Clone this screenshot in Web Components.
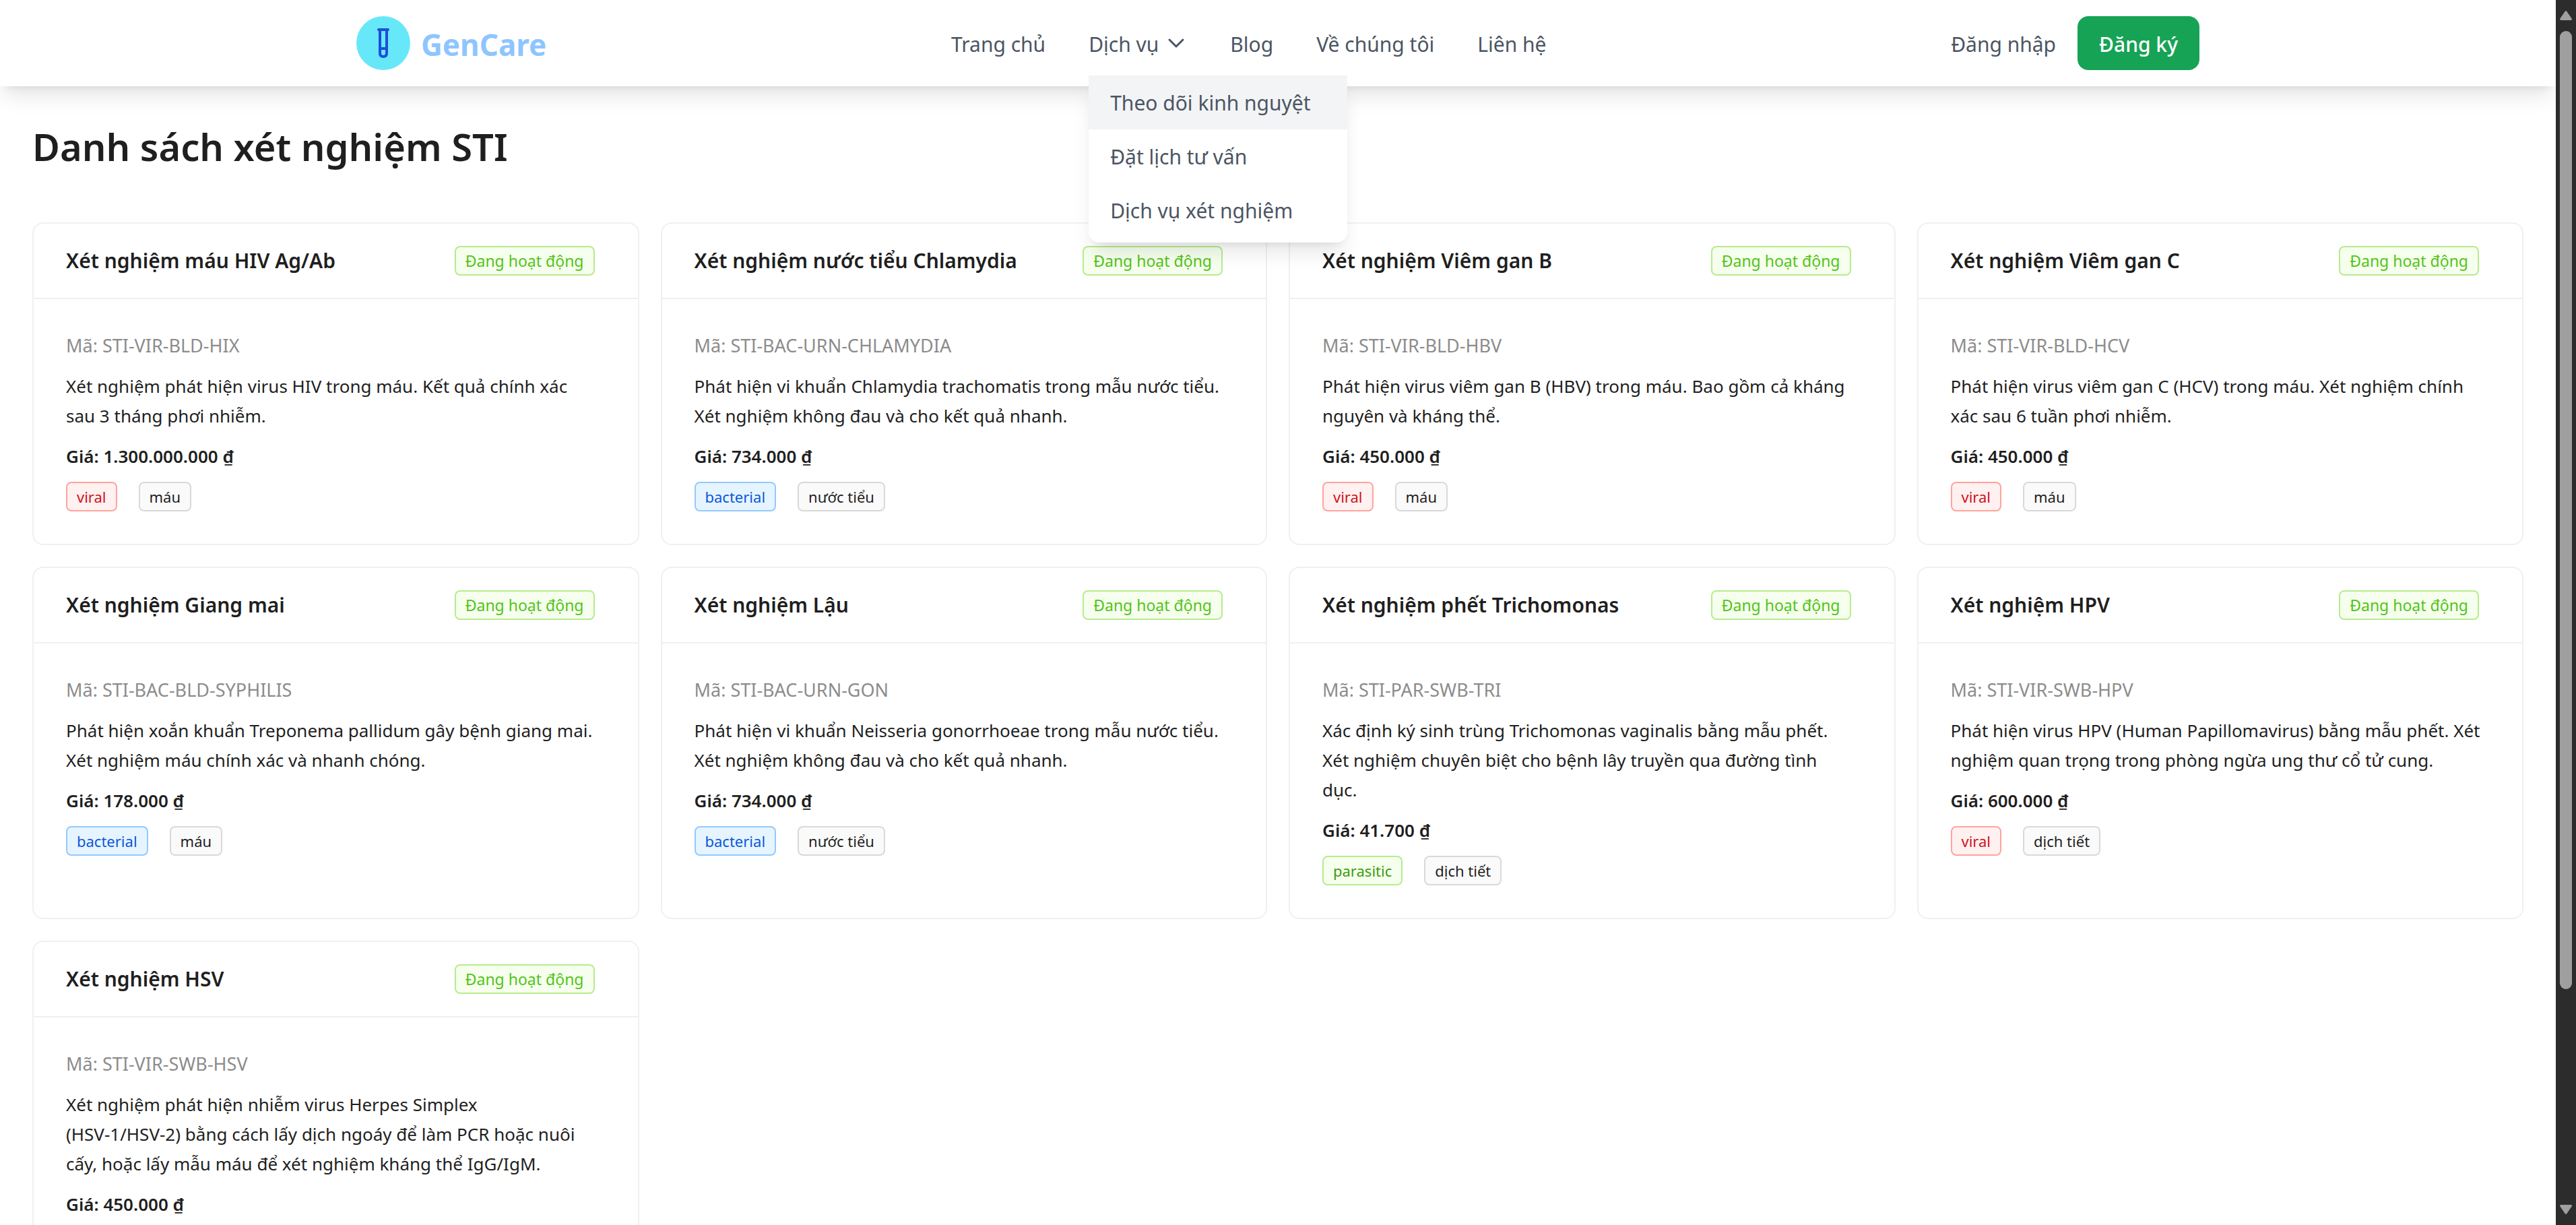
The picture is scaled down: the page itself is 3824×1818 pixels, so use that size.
<!DOCTYPE html>
<html lang="vi">
<head>
<meta charset="utf-8">
<meta name="viewport" content="width=device-width, initial-scale=1">
<title>GenCare</title>
<style>
  html, body { margin: 0; height: 100%; overflow: hidden; background: #fff; }
  body { font-family: "Noto Sans", "Open Sans", sans-serif; color: #1f1f1f; }
</style>
</head>
<body>
<gc-app>
  <gc-header slot="header"></gc-header>
  <gc-test-list heading="Danh sách xét nghiệm STI"></gc-test-list>
</gc-app>

<script>
class GcElement extends HTMLElement {
  connectedCallback() {
    if (this.shadowRoot) return;
    this.attachShadow({ mode: 'open' }).innerHTML = this.render();
  }
}

/* Frame: header and content on the left, scroll track on the right */
customElements.define('gc-app', class extends GcElement {
  render() {
    return `
    <style>
      :host { display: flex; height: 100vh; overflow: hidden; }
      .view { flex: 1; min-width: 0; overflow: hidden; display: flex; flex-direction: column; }
      main { flex: 1; min-height: 0; }
    </style>
    <div class="view">
      <slot name="header"></slot>
      <main><slot></slot></main>
    </div>
    <gc-scrollbar></gc-scrollbar>`;
  }
});

customElements.define('gc-scrollbar', class extends GcElement {
  render() {
    return `
    <style>
      :host { display: flex; flex-direction: column; align-items: center; width: 30px; padding: 16px 0; box-sizing: border-box; background: #2c2c2c; }
      svg { display: block; width: 18px; height: 14px; fill: #9f9f9f; }
      .track { flex: 1; width: 18px; padding: 16px 0; }
      .thumb { height: 82.4%; border-radius: 9px; background: #9f9f9f; }
    </style>
    <svg viewBox="0 0 18 14" aria-hidden="true"><path d="M7.6 1Q9-1 10.4 1L17.6 11.5Q18.6 14 16.5 14H1.5Q-.6 14 .4 11.5Z"/></svg>
    <div class="track"><div class="thumb"></div></div>
    <svg viewBox="0 0 18 14" aria-hidden="true"><path d="M7.6 13Q9 15 10.4 13L17.6 2.5Q18.6 0 16.5 0H1.5Q-.6 0 .4 2.5Z"/></svg>`;
  }
});

customElements.define('gc-logo', class extends GcElement {
  render() {
    return `
    <style>
      :host { display: block; }
      a { display: flex; align-items: center; gap: 16px; text-decoration: none; color: #8ec5ff; font-size: 44px; font-weight: 700; line-height: 64px; }
      .mark { display: flex; align-items: center; justify-content: center; width: 80px; height: 80px; border-radius: 50%; background: #67e8f9; }
      .name { padding-top: 4px; }
      svg { width: 48px; height: 48px; fill: none; stroke: #1d4ed8; stroke-width: 4; stroke-linecap: round; stroke-linejoin: round; }
    </style>
    <a href="#">
      <span class="mark"><svg viewBox="0 0 48 48" aria-hidden="true">
        <path d="M17 4H31M19 4V39Q19 44 24 44T29 39V4M19 32H29"/>
      </svg></span>
      <span class="name">GenCare</span>
    </a>`;
  }
});

customElements.define('gc-menu', class extends GcElement {
  render() {
    return `
    <style>
      :host { display: block; position: relative; }
      button { display: flex; align-items: center; gap: 10px; padding: 0; border: 0; background: none; font: inherit; color: inherit; line-height: 48px; cursor: pointer; }
      svg { width: 32px; height: 32px; fill: none; stroke: currentColor; stroke-width: 3; stroke-linecap: round; stroke-linejoin: round; }
      .panel { position: absolute; left: 0; top: 100%; z-index: 2; margin-top: 22px; width: 384px; padding-bottom: 8px; background: #fff; border-radius: 0 0 16px 16px; box-shadow: 0 20px 30px -6px rgba(0,0,0,.1), 0 8px 12px -8px rgba(0,0,0,.1); }
      ::slotted(a) { display: block; padding: 17px 32px 15px; line-height: 48px; color: inherit; text-decoration: none; }
      ::slotted(a[aria-current]) { background: #f3f4f6; }
    </style>
    <button type="button" aria-expanded="true">${this.getAttribute('label')}
      <svg viewBox="0 0 32 32" aria-hidden="true"><path d="M6 9L16 19L26 9"/></svg>
    </button>
    <div class="panel"><slot></slot></div>`;
  }
});

customElements.define('gc-header', class extends GcElement {
  render() {
    return `
    <style>
      :host { display: block; position: relative; z-index: 1; padding: 24px 64px; background: #fff; box-shadow: 0 20px 30px -6px rgba(0,0,0,.1), 0 8px 12px -8px rgba(0,0,0,.1); font-size: 30px; line-height: 48px; color: #4b5563; }
      .bar { display: flex; align-items: center; justify-content: space-between; max-width: 2736px; margin: 0 auto; }
      nav { display: flex; align-items: center; gap: 64px; padding-top: 4px; }
      .auth { display: flex; align-items: center; gap: 32px; }
      a { color: inherit; text-decoration: none; }
      .auth a { padding-top: 4px; }
      .auth button { height: 80px; padding: 4px 32px 0; border: 0; border-radius: 16px; background: #17a355; color: #fff; font: inherit; font-weight: 500; cursor: pointer; }
    </style>
    <div class="bar">
      <gc-logo></gc-logo>
      <nav>
        <a href="#">Trang chủ</a>
        <gc-menu label="Dịch vụ">
          <a href="#" aria-current="true">Theo dõi kinh nguyệt</a>
          <a href="#">Đặt lịch tư vấn</a>
          <a href="#">Dịch vụ xét nghiệm</a>
        </gc-menu>
        <a href="#">Blog</a>
        <a href="#">Về chúng tôi</a>
        <a href="#">Liên hệ</a>
      </nav>
      <div class="auth">
        <a href="#">Đăng nhập</a>
        <button type="button">Đăng ký</button>
      </div>
    </div>`;
  }
});

customElements.define('gc-tag', class extends GcElement {
  render() {
    return `
    <style>
      :host { display: block; box-sizing: border-box; padding: 0 14px; border: 2px solid #d9d9d9; border-radius: 8px; background: #fafafa; color: #1f1f1f; font-size: 22px; line-height: 40px; font-weight: 400; white-space: nowrap; }
      :host([tone="success"]) { background: #f6ffed; border-color: #b7eb8f; color: #52c41a; font-size: 23px; }
      :host([tone="viral"]) { background: #fff1f0; border-color: #ffa39e; color: #cf1322; }
      :host([tone="bacterial"]) { background: #e6f4ff; border-color: #91caff; color: #0958d9; }
      :host([tone="parasitic"]) { background: #f6ffed; border-color: #b7eb8f; color: #389e0d; }
    </style>
    <slot></slot>`;
  }
});

customElements.define('gc-test-card', class extends GcElement {
  render() {
    const a = n => this.getAttribute(n);
    const tags = a('kind')
      ? `<gc-tag tone="${a('kind')}">${a('kind')}</gc-tag><gc-tag>${a('sample')}</gc-tag>` : '';
    return `
    <style>
      :host { display: block; box-sizing: border-box; border: 2px solid #f0f0f0; border-radius: 16px; background: #fff; }
      header { display: flex; align-items: center; justify-content: space-between; height: 110px; padding: 0 64px 0 48px; border-bottom: 2px solid #f0f0f0; }
      h2 { margin: 0; font-size: 30px; font-weight: 600; line-height: 48px; }
      .body { display: flex; flex-direction: column; gap: 16px; padding: 47px 60px 48px 48px; font-size: 26px; line-height: 44px; }
      p { margin: 0; }
      .code { font-size: 27px; color: #8c8c8c; }
      .price { font-weight: 600; }
      .tags { display: flex; gap: 32px; min-height: 44px; }
    </style>
    <header><h2>${a('name')}</h2><gc-tag tone="success">Đang hoạt động</gc-tag></header>
    <div class="body">
      <p class="code">Mã: ${a('code')}</p>
      <p><slot></slot></p>
      <p class="price">Giá: ${a('price')} ₫</p>
      <div class="tags">${tags}</div>
    </div>`;
  }
});

const TESTS = [
  ['Xét nghiệm máu HIV Ag/Ab', 'STI-VIR-BLD-HIX', '1.300.000.000', 'viral', 'máu', 'Xét nghiệm phát hiện virus HIV trong máu. Kết quả chính xác sau 3 tháng phơi nhiễm.'],
  ['Xét nghiệm nước tiểu Chlamydia', 'STI-BAC-URN-CHLAMYDIA', '734.000', 'bacterial', 'nước tiểu', 'Phát hiện vi khuẩn Chlamydia trachomatis trong mẫu nước tiểu. Xét nghiệm không đau và cho kết quả nhanh.'],
  ['Xét nghiệm Viêm gan B', 'STI-VIR-BLD-HBV', '450.000', 'viral', 'máu', 'Phát hiện virus viêm gan B (HBV) trong máu. Bao gồm cả kháng nguyên và kháng thể.'],
  ['Xét nghiệm Viêm gan C', 'STI-VIR-BLD-HCV', '450.000', 'viral', 'máu', 'Phát hiện virus viêm gan C (HCV) trong máu. Xét nghiệm chính xác sau 6 tuần phơi nhiễm.'],
  ['Xét nghiệm Giang mai', 'STI-BAC-BLD-SYPHILIS', '178.000', 'bacterial', 'máu', 'Phát hiện xoắn khuẩn Treponema pallidum gây bệnh giang mai. Xét nghiệm máu chính xác và nhanh chóng.'],
  ['Xét nghiệm Lậu', 'STI-BAC-URN-GON', '734.000', 'bacterial', 'nước tiểu', 'Phát hiện vi khuẩn Neisseria gonorrhoeae trong mẫu nước tiểu. Xét nghiệm không đau và cho kết quả nhanh.'],
  ['Xét nghiệm phết Trichomonas', 'STI-PAR-SWB-TRI', '41.700', 'parasitic', 'dịch tiết', 'Xác định ký sinh trùng Trichomonas vaginalis bằng mẫu phết. Xét nghiệm chuyên biệt cho bệnh lây truyền qua đường tình dục.'],
  ['Xét nghiệm HPV', 'STI-VIR-SWB-HPV', '600.000', 'viral', 'dịch tiết', 'Phát hiện virus HPV (Human Papillomavirus) bằng mẫu phết. Xét nghiệm quan trọng trong phòng ngừa ung thư cổ tử cung.'],
  ['Xét nghiệm HSV', 'STI-VIR-SWB-HSV', '450.000', '', '', 'Xét nghiệm phát hiện nhiễm virus Herpes Simplex<br>(HSV-1/HSV-2) bằng cách lấy dịch ngoáy để làm PCR hoặc nuôi cấy, hoặc lấy mẫu máu để xét nghiệm kháng thể IgG/IgM.']
];

customElements.define('gc-test-list', class extends GcElement {
  render() {
    return `
    <style>
      :host { display: block; padding: 48px; }
      h1 { margin: 0 0 72px; font-size: 56px; font-weight: 600; line-height: 82px; }
      .grid { display: grid; grid-template-columns: repeat(4, minmax(0, 1fr)); gap: 32px; }
    </style>
    <h1>${this.getAttribute('heading')}</h1>
    <div class="grid">${TESTS.map(([name, code, price, kind, sample, text]) =>
      `<gc-test-card name="${name}" code="${code}" price="${price}" kind="${kind}" sample="${sample}">${text}</gc-test-card>`).join('')}</div>`;
  }
});
</script>
</body>
</html>
